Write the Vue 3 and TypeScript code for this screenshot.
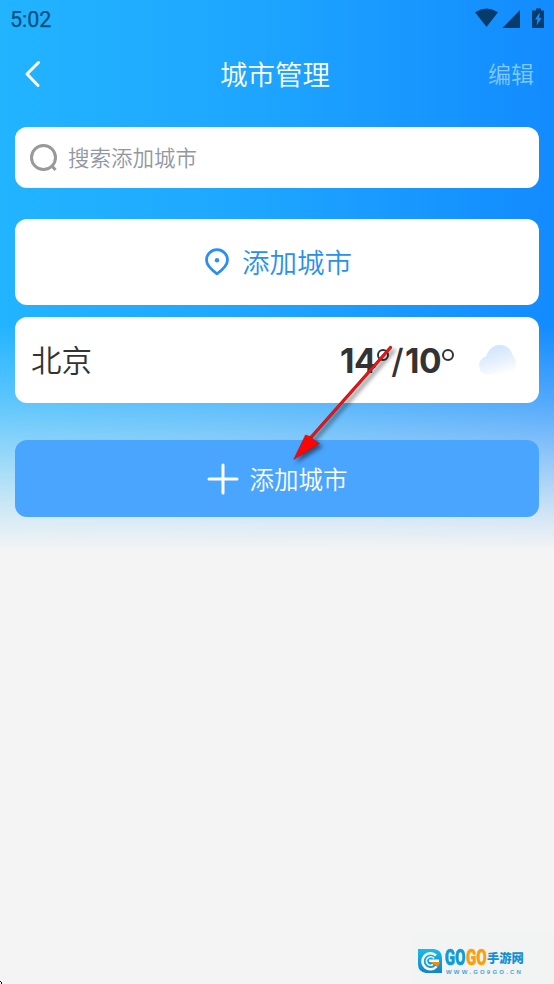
<script setup lang="ts">
const time = '5:02'
const title = '城市管理'
const addLabel = '添加城市'
const city = { name: '北京', high: 14, low: 10 }
</script>

<template>
  <main class="screen">
    <header class="status">
      <span class="time">{{ time }}</span>
      <svg class="status-icons" width="72" height="22" viewBox="0 0 72 22" fill="#053c6c">
        <path d="M1 4.200Q12.500-3.200 24 4.200L12.500 19Z" />
        <path d="M46 2V20H28.500Z" />
        <path fill-rule="evenodd" d="M62 0.500H67V2.500H70V20H58V2.500H62ZM65 5.500L61 11.500H63.500L62.500 17.500L67.500 10H64.800L66 5.500Z" />
      </svg>
    </header>
    <nav class="nav">
      <svg class="back" width="20" height="30" viewBox="0 0 20 30" fill="none" stroke="#fff" stroke-width="3" stroke-linecap="round" stroke-linejoin="round">
        <path d="M14.500 3.500L3 15L14 26.500" />
      </svg>
      <h1>{{ title }}</h1>
      <span class="edit">编辑</span>
    </nav>

    <section class="search">
      <svg width="30" height="30" viewBox="0 0 30 30" fill="none" stroke="#999" stroke-width="3">
        <circle cx="14.500" cy="14.500" r="12" />
        <path d="M22.500 22.500L26.500 27" />
      </svg>
      <span>搜索添加城市</span>
    </section>

    <section class="locate">
      <svg width="26" height="28" viewBox="0 0 26 28" fill="none" stroke="#2b8ff0">
        <path stroke-width="2.800" stroke-linejoin="round" d="M13 25.800C10.500 24 2.500 18 2.500 12A10.500 10.300 0 0 1 23.500 12C23.500 18 15.500 24 13 25.800Z" />
        <circle cx="13" cy="12.200" r="2.200" fill="#2b8ff0" stroke="none" />
      </svg>
      <span>{{ addLabel }}</span>
    </section>

    <section class="city">
      <span class="city-name">{{ city.name }}</span>
      <span class="temp"><b>{{ city.high }}</b><i></i><em>/</em><b>{{ city.low }}</b><i></i></span>
      <svg class="cloud" width="40" height="32" viewBox="0 0 40 32">
        <defs>
          <linearGradient id="cloud" x1="0.300" y1="0" x2="0.650" y2="1">
            <stop offset="0" stop-color="#cce3fc" />
            <stop offset="0.600" stop-color="#e9f2fd" />
            <stop offset="1" stop-color="#fff" />
          </linearGradient>
        </defs>
        <path fill="url(#cloud)" d="M10 31A9.500 9.500 0 0 1 9 12.500C12 5 16 1 23 1C30 1 34 5.500 36 12C41 17 41 31 30 31Z" />
      </svg>
    </section>

    <button class="add" type="button">
      <svg width="32" height="32" viewBox="0 0 32 32" stroke="#fff" stroke-width="3" stroke-linecap="round">
        <path d="M16 2V30M2 16H30" />
      </svg>
      <span>{{ addLabel }}</span>
    </button>

    <svg class="arrow" width="120" height="130" viewBox="0 0 120 130">
      <path d="M110.500 6.500L30 97.500" fill="none" stroke="#b01418" stroke-width="3.200" stroke-linecap="round" />
      <path d="M110.500 6.500L30 97.500" fill="none" stroke="#e81417" stroke-width="1.900" stroke-linecap="round" />
      <path d="M13.700 118.500L25.500 94L31 96L34.500 99.500L39.500 102.500Z" fill="#fb0505" stroke="#b01418" stroke-width="0.600" />
    </svg>

    <footer class="brand">
      <svg width="25" height="25" viewBox="0 0 25 25">
        <defs>
          <linearGradient id="mark" x1="0" y1="0" x2="0" y2="1">
            <stop offset="0" stop-color="#16bce8" />
            <stop offset="1" stop-color="#1482ca" />
          </linearGradient>
        </defs>
        <path fill="url(#mark)" d="M0 0H16Q24 1 24 9V24H8Q0 23 0 15Z" />
        <path d="M18 6.500A8 8 0 1 0 18.500 17.500" fill="none" stroke="#fff" stroke-width="2.600" />
        <path d="M16 9.500A4.200 4.200 0 1 0 15 15.500" fill="none" stroke="#d8f5ff" stroke-width="1.800" />
        <path d="M11 10.500H21V13H11Z" fill="#fff" />
        <path d="M12 13H22L20 18Z" fill="#f58b0b" />
      </svg>
      <div class="brand-text">
        <div class="brand-name"><span class="go">GO</span><span class="go orange">GO</span><span class="cn">手游网</span></div>
        <div class="site">WWW.GO9GO.CN</div>
      </div>
    </footer>
    <svg class="corner" width="3" height="4" viewBox="0 0 3 4"><path d="M0 1H1V2H2V4H1V2H0Z" fill="#111" /></svg>
  </main>
</template>

<style>
body { background: #f4f4f4; }
</style>

<style scoped>
.screen {
  position: relative;
  box-sizing: border-box;
  width: 554px;
  height: 984px;
  padding: 0 15px;
  overflow: hidden;
  font-family: "Noto Sans CJK SC", sans-serif;
  font-weight: 350;
  background:
    linear-gradient(180deg, rgba(244,244,244,0) 325px, rgba(244,244,244,.27) 398px, rgba(244,244,244,.48) 440px, rgba(244,244,244,.86) 517px, #f4f4f4 550px),
    linear-gradient(90deg, #22b4ff, #1ea6ff 45%, #128bff);
}
.status { display: flex; justify-content: space-between; height: 38px; margin: 0 -7px 0 -5px; }
.time { padding-top: 7px; font: 400 21.500px/25px Roboto, sans-serif; color: #075080; -webkit-text-stroke: .25px #075080; }
.status-icons { margin-top: 8px; }
.nav { display: grid; grid-template-columns: 80px 1fr 80px; align-items: center; width: 512px; height: 72px; margin-left: 7px; }
.back { margin-left: 2px; }
h1 { margin: -2px 6px 0 0; text-align: center; font-size: 27.500px; line-height: 40px; font-weight: 350; color: #fff; }
.edit { justify-self: end; margin-top: -2px; font-size: 23px; line-height: 34px; color: #83c9ff; }
section, .add { box-sizing: border-box; width: 524px; border-radius: 12px; background: #fff; display: flex; align-items: center; }
.search { height: 61px; margin-top: 17px; padding-left: 14px; gap: 9px; color: #9297a1; font-size: 21.500px; }
.search span, .locate span, .city-name { margin-top: -2px; }
.locate { height: 86px; margin-top: 31px; padding-left: 2px; justify-content: center; gap: 12px; font-size: 27.500px; color: #2b8ff0; }
.city { height: 86px; margin-top: 12px; padding: 0 22px 0 16px; color: #333; }
.city-name { font-size: 30.500px; }
.temp { display: flex; align-items: center; margin: 2px 0 0 auto; font: 33.500px/40px Inter, sans-serif; }
.temp b { width: 37px; font-weight: 700; letter-spacing: -.4px; white-space: nowrap; }
.temp em { width: 15px; font-style: normal; font-weight: 500; text-align: center; }
.temp i { width: 8px; height: 8px; margin: 0 1px 13px 0; border: 2px solid #333; border-radius: 50%; }
.cloud { margin-left: 22px; }
.add { height: 77px; margin-top: 37px; padding: 0; border: 0; justify-content: center; gap: 11px; background: #4aa5ff; color: #fff; font: 350 24.500px "Noto Sans CJK SC", sans-serif; }
.arrow { position: absolute; left: 280px; top: 341px; filter: drop-shadow(3px 3px 2px rgba(0,0,0,.5)); }
.brand { position: absolute; left: 414px; top: 933px; width: 140px; height: 51px; box-sizing: border-box; display: flex; padding: 16px 0 0 4px; gap: 2px; background: #f2f3f3; }
.brand-name { display: flex; height: 18px; align-items: center; }
.go { width: 21px; font: 900 22px/18px Roboto, sans-serif; transform: scaleX(.68); transform-origin: left; color: #129bd8; -webkit-text-stroke: .6px #129bd8; }
.orange { color: #f9a10c; -webkit-text-stroke-color: #f9a10c; }
.cn { font-size: 12.300px; line-height: 18px; font-weight: 900; color: #1490d3; }
.site { margin: 2px 0 0 1px; font: 700 6px/7px "Liberation Sans", sans-serif; letter-spacing: 2.200px; color: #45a6d5; white-space: nowrap; }
.corner { position: absolute; left: 0; bottom: 0; }
</style>
